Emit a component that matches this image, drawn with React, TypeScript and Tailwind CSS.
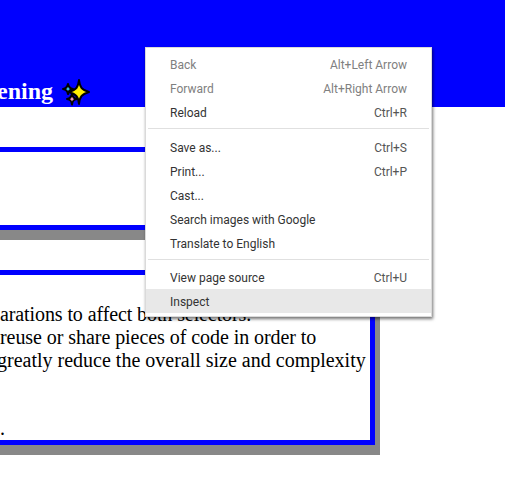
import React from "react";

type MenuEntry = { label: string; shortcut?: string; disabled?: boolean; active?: boolean };

const topItems: MenuEntry[] = [
  { label: "Back", shortcut: "Alt+Left Arrow", disabled: true },
  { label: "Forward", shortcut: "Alt+Right Arrow", disabled: true },
  { label: "Reload", shortcut: "Ctrl+R" },
];

const middleItems: MenuEntry[] = [
  { label: "Save as...", shortcut: "Ctrl+S" },
  { label: "Print...", shortcut: "Ctrl+P" },
  { label: "Cast..." },
  { label: "Search images with Google" },
  { label: "Translate to English" },
];

const bottomItems: MenuEntry[] = [
  { label: "View page source", shortcut: "Ctrl+U" },
  { label: "Inspect", active: true },
];

function MenuRow({ item }: { item: MenuEntry }) {
  return (
    <div
      className={`flex h-6 items-center justify-between pt-px pl-6 pr-6 ${item.active ? "bg-[#e8e8e8]" : ""} ${
        item.disabled ? "text-[#808080]" : "text-[#333333]"
      }`}
    >
      <span>{item.label}</span>
      {item.shortcut && <span className={item.disabled ? "text-[#808080]" : "text-[#555555]"}>{item.shortcut}</span>}
    </div>
  );
}

function ContextMenu() {
  return (
    <div className="absolute left-[145px] top-[47px] w-[287px] border border-[#dadada] bg-white pt-1 pb-[3px] font-['Roboto',sans-serif] text-xs shadow-[1px_2px_3px_rgba(0,0,0,0.55)]">
      {topItems.map((item) => (
        <MenuRow key={item.label} item={item} />
      ))}
      <div className="mx-0.5 mt-1 mb-[6px] h-px bg-[#e0e0e0]" />
      {middleItems.map((item) => (
        <MenuRow key={item.label} item={item} />
      ))}
      <div className="mx-0.5 mt-1 mb-[5px] h-px bg-[#e0e0e0]" />
      {bottomItems.map((item) => (
        <MenuRow key={item.label} item={item} />
      ))}
    </div>
  );
}

// sparkles emoji: three four-pointed stars with a black outline
function Sparkles() {
  return (
    <svg width="30" height="30" viewBox="0 0 30 30" className="ml-[8px] shrink-0" aria-hidden>
      <path
        d="M18 3 C18.8 10 20.5 12.8 28 15 C20.5 17.2 18.8 20 18 27 C17.2 20 15.5 17.2 8 15 C15.5 12.8 17.2 10 18 3 Z"
        fill="#ffee00"
        stroke="#000"
        strokeWidth="2"
        strokeLinejoin="round"
      />
      <path
        d="M7 7 C7.5 10 8.4 11.4 12 12 C8.4 12.6 7.5 14 7 17 C6.5 14 5.6 12.6 2 12 C5.6 11.4 6.5 10 7 7 Z"
        fill="#3cc8f0"
        stroke="#000"
        strokeWidth="2"
        strokeLinejoin="round"
      />
      <path
        d="M11 17 C11.5 20 12.4 21.4 16 22 C12.4 22.6 11.5 24 11 27.5 C10.5 24 9.6 22.6 6 22 C9.6 21.4 10.5 20 11 17 Z"
        fill="#f49ac1"
        stroke="#000"
        strokeWidth="2"
        strokeLinejoin="round"
      />
    </svg>
  );
}

export default function App() {
  return (
    <div className="relative h-[480px] w-[505px] overflow-hidden bg-white font-['Liberation_Serif',serif] text-black">
      <header className="flex h-[107px] items-end bg-[#0000ff]">
        <h1 className="-ml-[3px] mb-[2px] whitespace-nowrap text-2xl leading-[27px] font-bold text-white">ening</h1>
        <Sparkles />
      </header>

      <main className="-ml-5 flex w-[395px] flex-col gap-10 pt-10">
        <section className="h-[83px] border-[5px] border-[#0000ff] shadow-[5px_10px_0_#888888]" />
        <section className="h-[175px] border-[5px] border-[#0000ff] pt-[28px] pl-[15px] text-xl leading-[23px] whitespace-nowrap shadow-[5px_10px_0_#888888]">
          <p className="tracking-[-0.1px]">arations to affect both selectors.</p>
          <p className="tracking-[-0.06px]">reuse or share pieces of code in order to</p>
          <p className="-ml-[3px]">greatly reduce the overall size and complexity</p>
          <p className="mt-[45px]">.</p>
        </section>
      </main>

      <ContextMenu />
    </div>
  );
}
